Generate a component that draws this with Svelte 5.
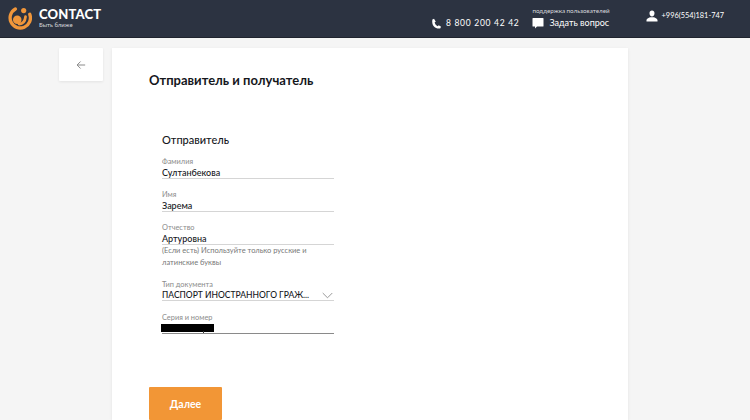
<script>
  const fields = [
    { label: "Фамилия", value: "Султанбекова" },
    { label: "Имя", value: "Зарема" },
    { label: "Отчество", value: "Артуровна", hint: "(Если есть) Используйте только русские и латинские буквы" },
  ];
</script>

<header class="topbar">
  <div class="brand">
    <svg class="logo" viewBox="0 0 26 26" width="24" height="24">
      <path d="M8 3.200A11 11 0 1 0 23.600 9" fill="none" stroke="#f0963a" stroke-width="3.600" stroke-linecap="round" />
      <circle cx="17" cy="5" r="2.800" fill="#f0963a" />
      <circle cx="10" cy="15" r="4.600" fill="#f0963a" />
      <path d="M12 19.500c4 0 6.500-3 7-8" fill="none" stroke="#f0963a" stroke-width="3" stroke-linecap="round" />
    </svg>
    <div>
      <div class="name">CONTACT</div>
      <div class="tagline">Быть ближе</div>
    </div>
  </div>
  <div class="contacts">
    <div class="phone">
      <svg viewBox="0 0 24 24" width="11" height="11"><path fill="#fff" d="M6.600 1.500 3 3C2 9 3 14 6 18s8 5.500 14 5l2-4-5-3-2.500 2c-3-1-6-5-6.500-8.500L10.500 8z" /></svg>
      <span>8 800 200 42 42</span>
    </div>
    <div class="support">
      <div class="support-label">поддержка пользователей</div>
      <div class="ask">
        <svg viewBox="0 0 24 24" width="12" height="12"><path fill="#fff" d="M2 2h20a1 1 0 0 1 1 1v15a1 1 0 0 1-1 1H10l-4 4v-4H2a1 1 0 0 1-1-1V3a1 1 0 0 1 1-1z" /></svg>
        <span>Задать вопрос</span>
      </div>
    </div>
    <div class="user">
      <svg viewBox="0 0 24 24" width="12" height="12"><path fill="#fff" d="M12 1c3 0 5 2.200 5 5.500S15 13 12 13 7 9.800 7 6.500 9 1 12 1zM1 23v-3c0-3 6-5 7.500-5.500h7C17 15 23 17 23 20v3z" /></svg>
      <span>+996(554)181-747</span>
    </div>
  </div>
</header>

<div class="page">
  <button class="back" aria-label="Назад">
    <svg viewBox="0 0 12 12" width="10" height="10"><path d="M11 6H1.500M5.500 1.800 1.300 6l4.200 4.200" fill="none" stroke="#8a8a8a" stroke-width="1.200" /></svg>
  </button>
  <main class="card">
    <h1>Отправитель и получатель</h1>
    <section class="form">
      <h2>Отправитель</h2>
      {#each fields as f}
        <div class="field">
          <div class="label">{f.label}</div>
          <div class="value">{f.value}</div>
          {#if f.hint}
            <div class="hint">{f.hint}</div>
          {/if}
        </div>
      {/each}
      <div class="field select">
        <div class="label">Тип документа</div>
        <div class="value">
          <span class="clip">ПАСПОРТ ИНОСТРАННОГО ГРАЖ...</span>
          <svg viewBox="0 0 12 7" width="11" height="7"><path d="M.8.800 6 6 11.200.800" fill="none" stroke="#8f8f8f" stroke-width="1" /></svg>
        </div>
      </div>
      <div class="field secret">
        <div class="label">Серия и номер</div>
        <div class="value"><span class="redact"></span></div>
      </div>
    </section>
    <button class="next">Далее</button>
  </main>
</div>

<style>
  :global(body) {
    background: #f5f5f5;
    font-family: "Lato", "Noto Sans", sans-serif;
  }
  .topbar {
    height: 37px;
    background: #2c3341;
    border-bottom: 1px solid #20242e;
    display: flex;
    justify-content: space-between;
    color: #fff;
    padding: 0 26px 0 8px;
  }
  .brand {
    display: flex;
    align-items: center;
    gap: 7px;
    padding-bottom: 2px;
  }
  .name {
    font-size: 13px;
    font-weight: 900;
    line-height: 14px;
    letter-spacing: 0.15px;
  }
  .tagline {
    font-size: 6px;
    line-height: 8px;
    color: #d8dadf;
  }
  .contacts {
    display: flex;
    align-items: flex-start;
  }
  .phone {
    display: flex;
    align-items: center;
    gap: 4px;
    margin-top: 17px;
    font-size: 8.500px;
    letter-spacing: 0.7px;
    line-height: 12px;
  }
  .support {
    margin-left: 13px;
    padding-top: 7px;
  }
  .support-label {
    font-size: 6.250px;
    line-height: 8px;
    text-align: right;
    color: #d8dadf;
  }
  .ask {
    display: flex;
    align-items: center;
    gap: 5px;
    margin-top: 2px;
    font-size: 9px;
    line-height: 12px;
  }
  .user {
    display: flex;
    align-items: center;
    gap: 4px;
    margin-left: 36px;
    margin-top: 10px;
    font-size: 7.400px;
    line-height: 12px;
  }
  .page {
    display: flex;
    align-items: flex-start;
    gap: 9px;
    padding: 10px 0 0 59px;
  }
  .back {
    width: 44px;
    height: 33px;
    background: #fff;
    border: none;
    border-radius: 1px;
    box-shadow: 0 1px 3px rgba(0, 0, 0, 0.08);
    display: flex;
    align-items: center;
    justify-content: center;
    padding: 0;
  }
  .card {
    width: 516px;
    height: 372px;
    background: #fff;
    box-shadow: 0 1px 3px rgba(0, 0, 0, 0.08);
    padding: 24px 0 0 37px;
    box-sizing: border-box;
  }
  h1 {
    margin: 0;
    font-size: 13px;
    font-weight: 700;
    line-height: 16px;
    color: #15171c;
  }
  .form {
    width: 172px;
    margin: 45px 0 0 13px;
  }
  h2 {
    margin: 0 0 10px;
    font-size: 11px;
    font-weight: 500;
    line-height: 14px;
    color: #15171c;
  }
  .field {
    margin-bottom: 11px;
  }
  .label {
    font-size: 7.400px;
    line-height: 10px;
    color: #8b8b8b;
  }
  .value {
    font-size: 9px;
    font-weight: 500;
    line-height: 11px;
    height: 11px;
    color: #16181d;
    border-bottom: 1px solid #d5d5d5;
    display: flex;
    align-items: center;
    justify-content: space-between;
  }
  .hint {
    font-size: 7.500px;
    line-height: 12px;
    color: #777;
    margin-bottom: -2px;
  }
  .select {
    margin-top: 13px;
    margin-bottom: 12px;
  }
  .select .value {
    height: 10px;
    align-items: flex-start;
  }
  .select .value svg {
    margin: 2px 1px 0 0;
  }
  .clip {
    white-space: nowrap;
    font-size: 8.500px;
  }
  .secret .value {
    height: 10px;
    border-bottom-color: #8a8a8a;
    align-items: flex-start;
  }
  .redact {
    display: block;
    position: relative;
    width: 53px;
    height: 8px;
    margin: 1px 0 0 -1px;
    background: #000;
  }
  .redact::after {
    content: "";
    position: absolute;
    left: 42px;
    top: 7px;
    width: 1px;
    height: 2px;
    background: #333;
  }
  .next {
    display: block;
    width: 73px;
    height: 33px;
    margin-top: 53px;
    border: none;
    border-radius: 1px;
    background: #f29636;
    color: #fff;
    font-family: inherit;
    font-size: 10.500px;
    font-weight: 700;
  }
</style>
